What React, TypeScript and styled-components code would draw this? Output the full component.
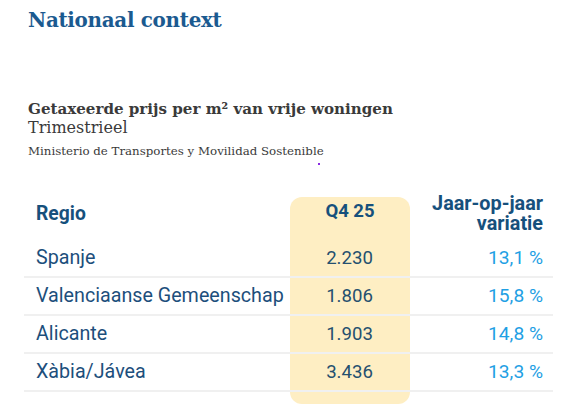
import React from "react";
import styled, { createGlobalStyle } from "styled-components";

const Global = createGlobalStyle`
  html, body { margin: 0; padding: 0; background: #ffffff; }
  body { width: 585px; height: 412px; overflow: hidden; }
`;

const Page = styled.div`
  padding: 6px 0 0 28px;
  display: flex;
  flex-direction: column;
`;

const Title = styled.h1`
  margin: 0;
  font-family: "DejaVu Serif", Georgia, serif;
  font-weight: 700;
  font-size: 19.9px;
  line-height: 28px;
  color: #1b5a90;
  letter-spacing: -0.3px;
`;

const Chart = styled.section`
  margin-top: 65px;
  display: flex;
  flex-direction: column;
  color: #3a3a3a;
`;

const ChartTitle = styled.h2`
  margin: 0;
  font-family: "DejaVu Serif", serif;
  font-weight: 700;
  font-size: 15.1px;
  line-height: 20px;
`;

const Subtitle = styled.p`
  margin: 0;
  font-family: "DejaVu Serif", serif;
  font-size: 16px;
  line-height: 18px;
`;

const Source = styled.p`
  margin: 4px 0 0;
  font-family: "DejaVu Serif", serif;
  font-size: 11.8px;
  line-height: 20px;
  position: relative;
`;

const Dot = styled.span`
  position: absolute;
  left: 290px;
  top: 22px;
  width: 2px;
  height: 2px;
  background: #8a2be2;
`;

const Grid = styled.div`
  margin: 36px 0 0 -4px;
  display: grid;
  grid-template-columns: 266px 120px 143px;
  font-family: Roboto, "Liberation Sans", sans-serif;
`;

type Col = "name" | "value" | "pct";

const headSize: Record<Col, string> = { name: "19.3px", value: "18.5px", pct: "19.8px" };
const bodySize: Record<Col, string> = { name: "19.7px", value: "18.6px", pct: "19.2px" };
const headPad: Record<Col, string> = { name: "7px 10px 0 12px", value: "5px 10px 0", pct: "0 10px 0 9px" };

const HeadCell = styled.div<{ $col: Col }>`
  height: ${(p) => (p.$col === "pct" ? "46px" : "43px")};
  margin-top: ${(p) => (p.$col === "pct" ? "-3px" : "0")};
  box-sizing: border-box;
  padding: ${(p) => headPad[p.$col]};
  text-align: ${(p) => (p.$col === "name" ? "left" : p.$col === "value" ? "center" : "right")};
  background: ${(p) => (p.$col === "value" ? "#feeec3" : "transparent")};
  border-radius: ${(p) => (p.$col === "value" ? "12px 12px 0 0" : "0")};
  font-size: ${(p) => headSize[p.$col]};
  font-weight: 700;
  line-height: ${(p) => (p.$col === "pct" ? "20px" : "19px")};
  color: #16507c;
`;

const Cell = styled.div<{ $col: Col }>`
  display: flex;
  align-items: center;
  justify-content: ${(p) =>
    p.$col === "name" ? "flex-start" : p.$col === "value" ? "center" : "flex-end"};
  padding: ${(p) => (p.$col === "name" ? "0 0 0 12px" : "0 10px 0 9px")};
  height: 36px;
  border-bottom: 2px solid #f0f0f0;
  background: ${(p) => (p.$col === "value" ? "#feeec3" : "transparent")};
  font-size: ${(p) => bodySize[p.$col]};
  line-height: 20px;
  white-space: nowrap;
  color: ${(p) => (p.$col === "pct" ? "#1fa0e4" : p.$col === "value" ? "#25506f" : "#1d4f7c")};
`;

const Foot = styled.div<{ $col: Col }>`
  height: 12px;
  background: ${(p) => (p.$col === "value" ? "#feeec3" : "transparent")};
  border-radius: ${(p) => (p.$col === "value" ? "0 0 12px 12px" : "0")};
`;

const rows = [
  { name: "Spanje", value: "2.230", pct: "13,1 %" },
  { name: "Valenciaanse Gemeenschap", value: "1.806", pct: "15,8 %" },
  { name: "Alicante", value: "1.903", pct: "14,8 %" },
  { name: "Xàbia/Jávea", value: "3.436", pct: "13,3 %" },
];

export default function App() {
  return (
    <>
      <Global />
      <Page>
        <Title>Nationaal context</Title>
        <Chart>
          <ChartTitle>Getaxeerde prijs per m² van vrije woningen</ChartTitle>
          <Subtitle>Trimestrieel</Subtitle>
          <Source>
            Ministerio de Transportes y Movilidad Sostenible
            <Dot />
          </Source>
          <Grid>
            <HeadCell $col="name">Regio</HeadCell>
            <HeadCell $col="value">Q4 25</HeadCell>
            <HeadCell $col="pct">Jaar-op-jaar<br />variatie</HeadCell>
            {rows.map((r) => (
              <React.Fragment key={r.name}>
                <Cell $col="name">{r.name}</Cell>
                <Cell $col="value">{r.value}</Cell>
                <Cell $col="pct">{r.pct}</Cell>
              </React.Fragment>
            ))}
            <Foot $col="name" />
            <Foot $col="value" />
            <Foot $col="pct" />
          </Grid>
        </Chart>
      </Page>
    </>
  );
}
